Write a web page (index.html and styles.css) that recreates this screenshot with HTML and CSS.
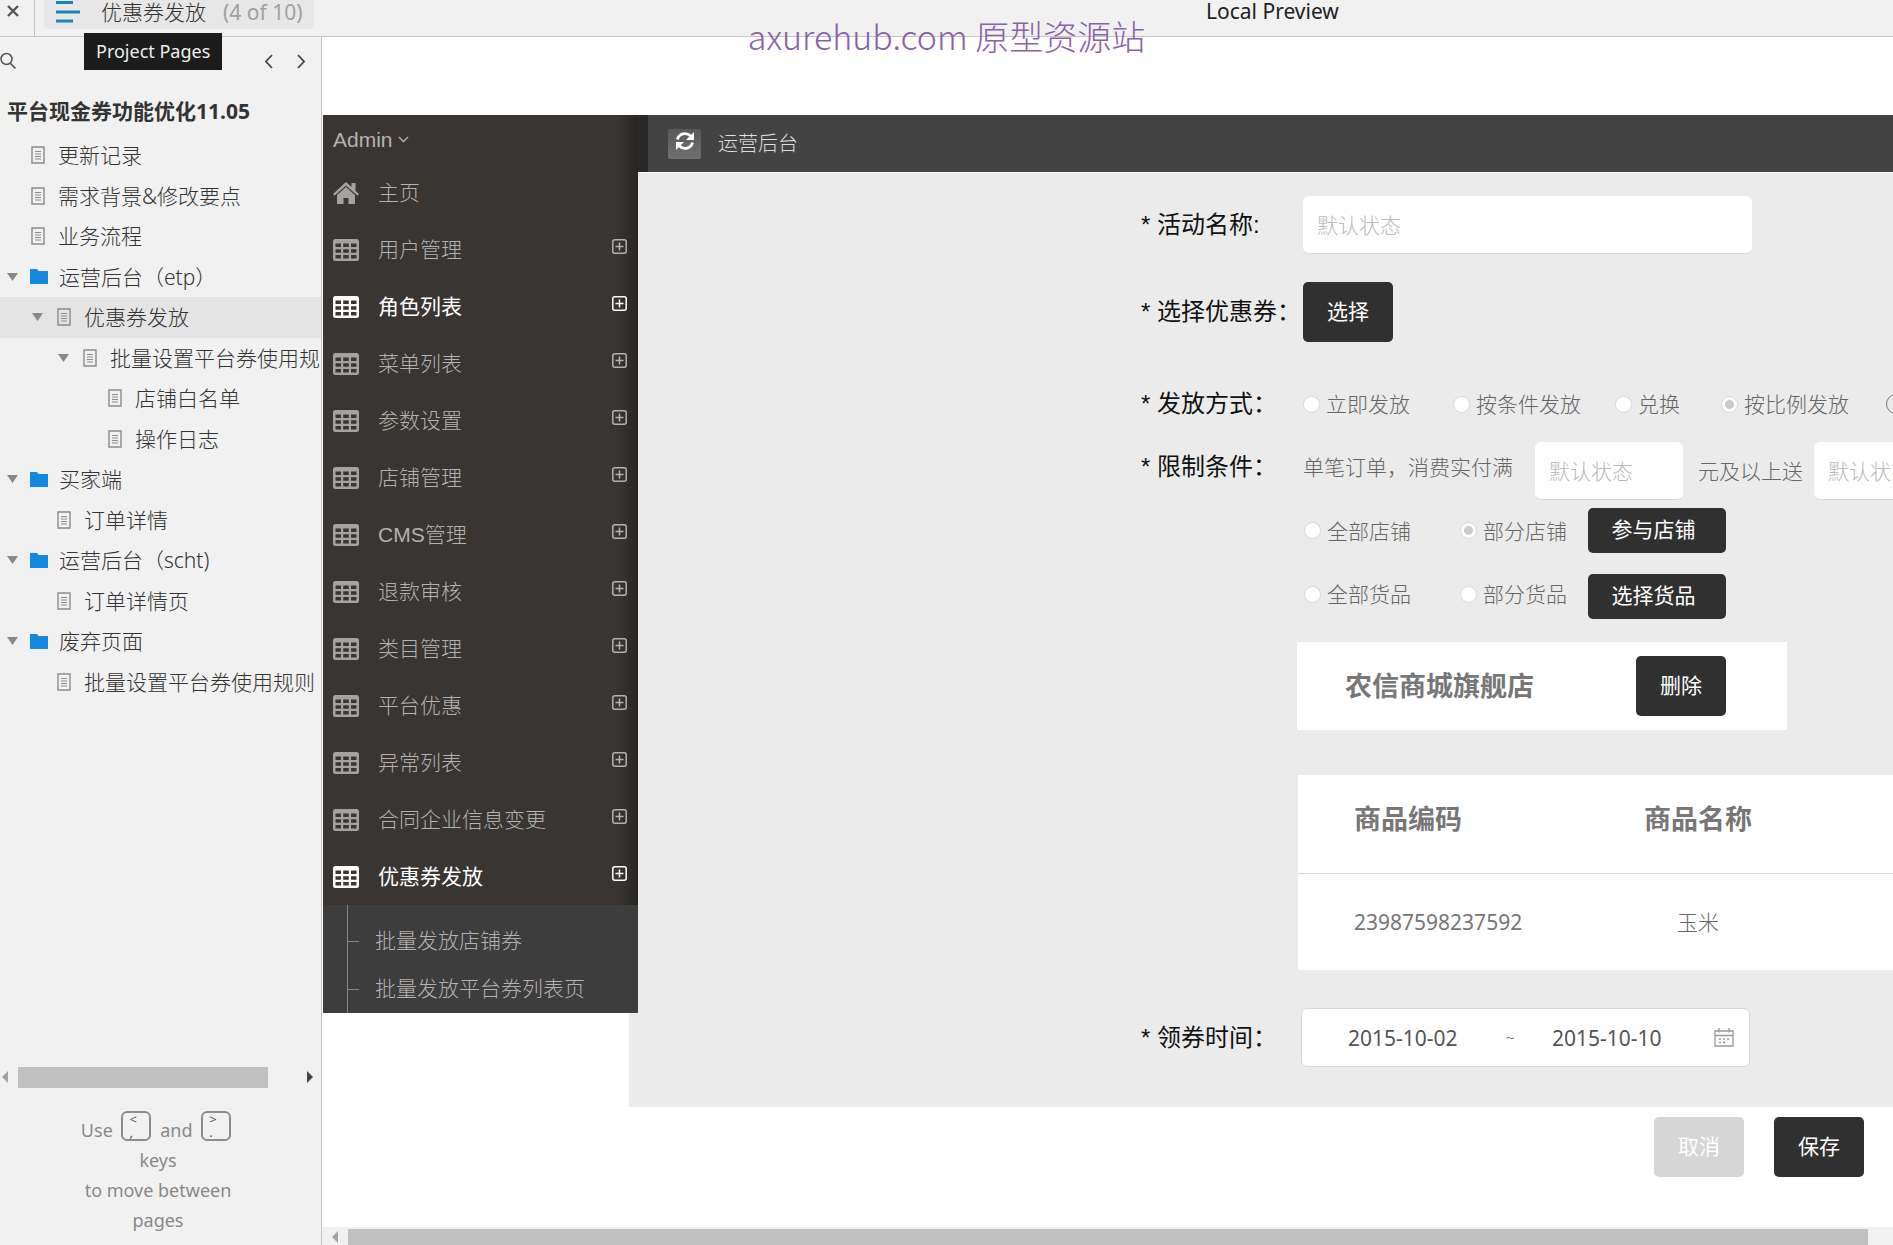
FILE: index.html
```html
<!DOCTYPE html>
<html lang="zh-CN">
<head>
<meta charset="utf-8">
<meta name="viewport" content="width=device-width, initial-scale=1">
<title>优惠券发放</title>
<link rel="stylesheet" href="styles.css">
</head>
<body>
<svg class="defs" aria-hidden="true">
  <symbol id="page" viewBox="0 0 14 18"><path d="M1 1h12v16H1z" fill="none" stroke="currentColor" stroke-width="1.4"/><path d="M4 5.500h6M4 8h6M4 10.500h6M4 13h6" stroke="currentColor" stroke-width="1.200"/></symbol>
  <symbol id="folder" viewBox="0 0 18 15"><path d="M0 0h7l1.500 2H18v13H0z" fill="#1288de"/></symbol>
  <symbol id="caret" viewBox="0 0 11 8"><path d="M0 0h11L5.500 8z" fill="#888"/></symbol>
  <symbol id="grid" viewBox="0 0 26 22"><path fill="currentColor" fill-rule="evenodd" d="M2.500 0h21A2.500 2.500 0 0 1 26 2.500v17a2.500 2.500 0 0 1-2.500 2.500h-21A2.500 2.500 0 0 1 0 19.500v-17A2.500 2.500 0 0 1 2.500 0zM2.500 4.500v3.500h5.500v-3.500zM10.200 4.500v3.500h5.600v-3.500zM18 4.500v3.500h5.500v-3.500zM2.500 10.200v3.500h5.500v-3.500zM10.200 10.200v3.500h5.600v-3.500zM18 10.200v3.500h5.500v-3.500zM2.500 16v3.500h5.500V16zM10.200 16v3.500h5.600V16zM18 16v3.500h5.500V16z"/></symbol>
  <symbol id="plus" viewBox="0 0 15 15"><rect x=".8" y=".8" width="13.400" height="13.400" rx="2" fill="none" stroke="currentColor" stroke-width="1.500"/><path d="M7.500 3.500v8M3.500 7.500h8" stroke="currentColor" stroke-width="1.500"/></symbol>
</svg>

<header class="topbar">
  <button class="close" aria-label="Close"><svg width="14" height="14" viewBox="0 0 14 14"><path d="M2 2l10 10M12 2L2 12" stroke="#555" stroke-width="2.400"/></svg></button>
  <button class="crumb">
    <svg width="24" height="22" viewBox="0 0 24 22"><path d="M0 1.500h17M0 11h24M0 20h17" stroke="#1a86b8" stroke-width="3"/></svg>
    <span>优惠券发放</span><span class="count">(4 of 10)</span>
  </button>
  <div class="preview">Local Preview</div>
</header>
<div class="tooltip" role="tooltip">Project Pages</div>
<div class="watermark">axurehub.com 原型资源站</div>

<div class="shell">
  <aside class="sidebar">
    <div class="tools">
      <button aria-label="Search"><svg width="16" height="18" viewBox="0 0 16 18"><circle cx="6.500" cy="7" r="5.500" fill="none" stroke="#555" stroke-width="1.500"/><path d="M10.500 11.500l5 5" stroke="#555" stroke-width="1.700"/></svg></button>
      <button class="prev" aria-label="Previous page"><svg width="9" height="15" viewBox="0 0 9 15"><path d="M8 1L2 7.500 8 14" fill="none" stroke="#444" stroke-width="1.800"/></svg></button>
      <button aria-label="Next page"><svg width="9" height="15" viewBox="0 0 9 15"><path d="M1 1l6 6.500L1 14" fill="none" stroke="#444" stroke-width="1.800"/></svg></button>
    </div>
    <h1 class="project">平台现金券功能优化11.05</h1>
    <nav class="tree">
      <a href="#"><svg class="ic-page"><use href="#page"/></svg>更新记录</a>
      <a href="#"><svg class="ic-page"><use href="#page"/></svg>需求背景&amp;修改要点</a>
      <a href="#"><svg class="ic-page"><use href="#page"/></svg>业务流程</a>
      <a href="#" class="parent"><svg class="ic-caret"><use href="#caret"/></svg><svg class="ic-folder"><use href="#folder"/></svg>运营后台（etp）</a>
      <a href="#" class="parent l1 current"><svg class="ic-caret"><use href="#caret"/></svg><svg class="ic-page"><use href="#page"/></svg>优惠券发放</a>
      <a href="#" class="parent l2"><svg class="ic-caret"><use href="#caret"/></svg><svg class="ic-page"><use href="#page"/></svg>批量设置平台券使用规则</a>
      <a href="#" class="l3"><svg class="ic-page"><use href="#page"/></svg>店铺白名单</a>
      <a href="#" class="l3"><svg class="ic-page"><use href="#page"/></svg>操作日志</a>
      <a href="#" class="parent"><svg class="ic-caret"><use href="#caret"/></svg><svg class="ic-folder"><use href="#folder"/></svg>买家端</a>
      <a href="#" class="l1"><svg class="ic-page"><use href="#page"/></svg>订单详情</a>
      <a href="#" class="parent"><svg class="ic-caret"><use href="#caret"/></svg><svg class="ic-folder"><use href="#folder"/></svg>运营后台（scht)</a>
      <a href="#" class="l1"><svg class="ic-page"><use href="#page"/></svg>订单详情页</a>
      <a href="#" class="parent"><svg class="ic-caret"><use href="#caret"/></svg><svg class="ic-folder"><use href="#folder"/></svg>废弃页面</a>
      <a href="#" class="l1"><svg class="ic-page"><use href="#page"/></svg>批量设置平台券使用规则</a>
    </nav>
    <div class="hscroll side-scroll">
      <svg width="6" height="12" viewBox="0 0 6 12"><path d="M6 0v12L0 6z" fill="#a3a3a3"/></svg>
      <div class="thumb"></div>
      <svg width="6" height="12" viewBox="0 0 6 12"><path d="M0 0v12l6-6z" fill="#444"/></svg>
    </div>
    <div class="hint">Use <kbd><span>&lt;</span><span>,</span></kbd> and <kbd><span>&gt;</span><span>.</span></kbd><br>keys<br>to move between<br>pages</div>
  </aside>

  <main class="stage">
    <div class="admin">
      <nav class="menu">
        <button class="user">Admin<svg width="11" height="7" viewBox="0 0 11 7"><path d="M1 1l4.500 4.500L10 1" fill="none" stroke="#a9a7a5" stroke-width="1.600"/></svg></button>
        <a href="#"><svg class="ic-home" viewBox="0 0 26 22"><path fill="currentColor" d="M13 0l5.500 5V1h4v7.700L26 12l-1.500 1.800L13 3.500 1.500 13.800 0 12zM13 5l9 8v9h-6.500v-6h-5v6H4v-9z"/></svg>主页</a>
        <a href="#"><svg class="ic-grid"><use href="#grid"/></svg>用户管理<svg class="ic-plus"><use href="#plus"/></svg></a>
        <a href="#" class="on"><svg class="ic-grid"><use href="#grid"/></svg>角色列表<svg class="ic-plus"><use href="#plus"/></svg></a>
        <a href="#"><svg class="ic-grid"><use href="#grid"/></svg>菜单列表<svg class="ic-plus"><use href="#plus"/></svg></a>
        <a href="#"><svg class="ic-grid"><use href="#grid"/></svg>参数设置<svg class="ic-plus"><use href="#plus"/></svg></a>
        <a href="#"><svg class="ic-grid"><use href="#grid"/></svg>店铺管理<svg class="ic-plus"><use href="#plus"/></svg></a>
        <a href="#"><svg class="ic-grid"><use href="#grid"/></svg>CMS管理<svg class="ic-plus"><use href="#plus"/></svg></a>
        <a href="#"><svg class="ic-grid"><use href="#grid"/></svg>退款审核<svg class="ic-plus"><use href="#plus"/></svg></a>
        <a href="#"><svg class="ic-grid"><use href="#grid"/></svg>类目管理<svg class="ic-plus"><use href="#plus"/></svg></a>
        <a href="#"><svg class="ic-grid"><use href="#grid"/></svg>平台优惠<svg class="ic-plus"><use href="#plus"/></svg></a>
        <a href="#"><svg class="ic-grid"><use href="#grid"/></svg>异常列表<svg class="ic-plus"><use href="#plus"/></svg></a>
        <a href="#"><svg class="ic-grid"><use href="#grid"/></svg>合同企业信息变更<svg class="ic-plus"><use href="#plus"/></svg></a>
        <a href="#" class="on"><svg class="ic-grid"><use href="#grid"/></svg>优惠券发放<svg class="ic-plus"><use href="#plus"/></svg></a>
        <div class="submenu">
          <div class="branch">
            <a href="#">批量发放店铺券</a>
            <a href="#">批量发放平台券列表页</a>
          </div>
        </div>
      </nav>

      <section class="work">
        <header class="workbar">
          <button class="refresh" aria-label="刷新"><svg width="20" height="20" viewBox="0 0 20 20"><path d="M2.500 8.500A7.500 7 0 0 1 15.500 5M17.500 11.500A7.500 7 0 0 1 4.500 15" fill="none" stroke="#fff" stroke-width="2.800"/><path d="M19 1v8h-8zM1 19v-8h8z" fill="#fff"/></svg></button>
          运营后台
        </header>
        <form class="form">
          <div class="row">
            <label class="name" for="act">* 活动名称:</label>
            <input class="box wide" id="act" type="text" placeholder="默认状态">
          </div>
          <div class="row coupon">
            <span class="name">* 选择优惠券：</span>
            <button class="btn square" type="button">选择</button>
          </div>
          <div class="row mode">
            <span class="name">* 发放方式：</span>
            <div class="modes">
              <label><input type="radio" name="mode">立即发放</label>
              <label><input type="radio" name="mode">按条件发放</label>
              <label><input type="radio" name="mode">兑换</label>
              <label><input type="radio" name="mode" checked>按比例发放</label>
              <label><input class="outlined" type="radio" name="mode" aria-label="其他"></label>
            </div>
          </div>
          <div class="row limit">
            <span class="name">* 限制条件：</span>
            <label class="before" for="full">单笔订单，消费实付满</label>
            <input class="box amount" id="full" type="text" placeholder="默认状态">
            <label class="after" for="gift">元及以上送</label>
            <input class="box amount" id="gift" type="text" placeholder="默认状态">
          </div>
          <div class="scope">
            <label><input type="radio" name="shop">全部店铺</label>
            <label><input type="radio" name="shop" checked>部分店铺</label>
            <button class="btn" type="button">参与店铺</button>
          </div>
          <div class="scope goods">
            <label><input type="radio" name="goods">全部货品</label>
            <label><input type="radio" name="goods">部分货品</label>
            <button class="btn" type="button">选择货品</button>
          </div>
          <div class="shop-card">
            <strong>农信商城旗舰店</strong>
            <button class="btn square" type="button">删除</button>
          </div>
          <table class="items">
            <thead><tr><th class="code">商品编码</th><th class="title">商品名称</th><th></th></tr></thead>
            <tbody><tr><td class="code">23987598237592</td><td class="title">玉米</td><td></td></tr></tbody>
          </table>
          <div class="row time">
            <span class="name">* 领券时间：</span>
            <div class="box wide dates">
              <input type="text" value="2015-10-02" aria-label="开始日期">
              <span class="tilde">~</span>
              <input type="text" value="2015-10-10" aria-label="结束日期">
              <svg width="20" height="19" viewBox="0 0 20 19"><path d="M1 3h18v15H1zM1 7.500h18M5 0v4.500M15 0v4.500" fill="none" stroke="#999" stroke-width="1.300"/><path d="M5 11h2M9 11h2M13 11h2M5 14.500h2M9 14.500h2" stroke="#999" stroke-width="1.500"/></svg>
            </div>
          </div>
        </form>
      </section>
    </div>
    <div class="actions">
      <button class="btn square cancel" type="button">取消</button>
      <button class="btn square" type="button">保存</button>
    </div>
    <div class="hscroll main-scroll">
      <svg width="6" height="12" viewBox="0 0 6 12"><path d="M6 0v12L0 6z" fill="#a3a3a3"/></svg>
      <div class="thumb"></div>
    </div>
  </main>
</div>
</body>
</html>
```
FILE: styles.css
```css
* { box-sizing: border-box; }
body {
  margin: 0;
  height: 100vh;
  display: flex;
  flex-direction: column;
  overflow: hidden;
  position: relative;
  background: #fff;
  color: #333;
  font: 300 21px/30px "Noto Sans", "Noto Sans CJK SC", sans-serif;
}
a { color: inherit; text-decoration: none; }
button { font: inherit; color: inherit; border: 0; background: none; padding: 0; }
svg { display: block; flex: none; }
.defs { position: absolute; width: 0; height: 0; }

/* top bar */
.topbar {
  flex: none;
  height: 37px;
  display: flex;
  align-items: flex-start;
  background: #f1f1f1;
  border-bottom: 1px solid #c4c4c4;
}
.close { width: 35px; height: 36px; padding: 2px 6px 16px; border-right: 1px solid #c4c4c4; }
.crumb {
  margin-left: 9px;
  width: 270px;
  height: 29px;
  padding: 0 0 6px 12px;
  display: flex;
  align-items: center;
  background: #e7e7e7;
  border-radius: 0 0 4px 4px;
  color: #333;
  white-space: nowrap;
}
.crumb svg { margin-right: 21px; }
.count { margin-left: 17px; color: #a0a0a0; font-weight: 400; }
.preview { margin-left: 892px; line-height: 22px; color: #222; white-space: nowrap; font-weight: 400; }
.tooltip {
  position: absolute;
  left: 84px;
  top: 33px;
  padding: 0 12px;
  background: #1c1c1c;
  color: #eee;
  font-size: 18px;
  font-weight: 400;
  line-height: 37px;
}
.watermark {
  position: absolute;
  left: 0;
  right: 0;
  top: 16px;
  text-align: center;
  font: 300 34px/40px "Noto Sans CJK SC", sans-serif;
  color: #8862a8;
  pointer-events: none;
}

.shell { flex: 1; display: flex; min-height: 0; }

/* page tree */
.sidebar {
  flex: none;
  width: 322px;
  display: flex;
  flex-direction: column;
  background: #f1f1f1;
  border-right: 1px solid #c4c4c4;
  overflow: hidden;
}
.tools { display: flex; align-items: center; height: 48px; padding-right: 15px; }
.tools .prev { margin: 0 24px 0 auto; }
.project { margin: 11px 0 9px; padding-left: 7px; font-size: 21px; line-height: 30px; font-weight: 700; white-space: nowrap; }
.tree { display: grid; grid-template-rows: repeat(14, 1fr); height: 567px; flex: none; }
.tree a { display: flex; align-items: center; padding-left: 31px; white-space: nowrap; }
.tree .l1 { padding-left: 57px; }
.tree .l2 { padding-left: 82px; }
.tree .l3 { padding-left: 108px; }
.tree .parent { padding-left: 7px; }
.tree .parent.l1 { padding-left: 32px; }
.tree .parent.l2 { padding-left: 58px; }
.tree .current { background: #e4e4e4; }
.ic-page { width: 14px; height: 18px; margin-right: 13px; color: #8c8c8c; }
.ic-folder { width: 18px; height: 15px; margin-right: 11px; }
.ic-caret { width: 11px; height: 8px; margin-right: 12px; }
.parent .ic-page { margin-left: 2px; }

.hscroll { display: flex; align-items: center; }
.thumb { background: #c1c1c1; }
.side-scroll { margin-top: auto; padding: 0 8px 0 2px; height: 22px; }
.side-scroll .thumb { width: 250px; height: 21px; margin: 0 auto 0 10px; }
.hint { padding: 23px 5px 10px 0; text-align: center; font-size: 18px; font-weight: 400; line-height: 30px; color: #888; }
.hint kbd {
  display: inline-block;
  width: 30px;
  height: 30px;
  margin: 0 4px;
  padding-left: 6px;
  border: 2px solid #8c8c8c;
  border-radius: 6px;
  font: 13px/13px "Noto Sans", sans-serif;
  text-align: left;
  color: #555;
}
.hint kbd span { display: block; }

/* prototype canvas */
.stage { flex: 1; min-width: 0; display: flex; flex-direction: column; overflow: hidden; }
.admin { display: flex; align-items: flex-start; margin: 78px 0 0 1px; }
.menu {
  position: relative;
  flex: none;
  width: 315px;
  background: linear-gradient(90deg, #393532 93%, #282624);
  color: #b4b2b0;
  font-family: "Liberation Sans", "Noto Sans CJK SC", sans-serif;
}
.user { display: flex; align-items: center; gap: 5px; height: 49px; padding-left: 10px; }
.menu > a { display: flex; align-items: center; height: 57px; padding: 0 11px 0 10px; }
.menu .on { color: #fff; font-weight: 400; }
.ic-grid, .ic-home { width: 26px; height: 22px; margin-right: 19px; }
.menu a:not(.on) .ic-grid, .ic-home { color: #a5a3a1; }
.ic-plus { width: 15px; height: 15px; margin: 0 0 6px auto; }
.submenu { padding-left: 24px; background: #3e3d3d; }
.branch { padding-top: 12px; border-left: 1px solid #858585; }
.branch a { display: flex; align-items: center; gap: 16px; height: 48px; }
.branch a::before { content: ""; width: 11px; height: 1px; background: #858585; }

.work { flex: 1; min-width: 0; margin-left: -9px; background: #ebebeb; }
.workbar {
  display: flex;
  align-items: center;
  gap: 17px;
  height: 57px;
  margin-left: 9px;
  padding-left: 20px;
  background: #434343;
  border-left: 10px solid #2a2929;
  color: #ddd;
  font-size: 20px;
}
.refresh { width: 33px; height: 30px; padding: 0 6px 6px 7px; border-radius: 2px; background: linear-gradient(#595959, #707070); }

/* form */
.form { padding: 23px 0 40px 512px; color: #666; overflow: hidden; border-top: 1px solid #fff; }
.row { display: flex; align-items: center; }
.name {
  flex: none;
  width: 162px;
  font-family: "Liberation Sans", "Noto Sans CJK SC", sans-serif;
  font-size: 24px;
  font-weight: 400;
  color: #111;
  white-space: nowrap;
}
.box {
  flex: none;
  height: 58px;
  padding: 0 14px;
  background: #fff;
  border: 0;
  border-bottom: 1px solid #d8d8d8;
  border-radius: 6px;
  font: inherit;
  color: #666;
}
.box::placeholder { color: #bbb; opacity: 1; }
.wide { width: 449px; }
.amount { width: 148px; }
.btn {
  height: 45px;
  width: 138px;
  padding: 0 7px 3px 0;
  border-radius: 5px;
  background: #303030;
  color: #fff;
  font-weight: 400;
}
.square { width: 90px; height: 60px; padding: 0 0 3px; }
.coupon { margin-top: 28px; }
.mode { margin-top: 45px; height: 34px; }
.modes { display: grid; grid-template-columns: 150px 162px 106px 165px 20px; }
.form label { flex: none; white-space: nowrap; }
.modes label, .scope label { display: flex; align-items: center; gap: 6px; }
input[type="radio"] {
  appearance: none;
  flex: none;
  width: 17px;
  height: 17px;
  margin: 0;
  border-radius: 50%;
  background: #fff;
  border: 1px solid #d8d8d8;
}
input[type="radio"]:checked { background: radial-gradient(circle, #ccc 4px, #fff 5px); }
input.outlined { width: 20px; height: 20px; background: none; border-color: #777; }
.limit { margin-top: 21px; align-items: flex-start; }
.limit .name, .limit .before { line-height: 50px; }
.limit .before { width: 232px; }
.limit .after { width: 131px; padding-left: 15px; line-height: 58px; }
.scope { display: grid; grid-template-columns: 156px 128px 138px; margin: 8px 0 0 163px; }
.goods { margin-top: 21px; }
.goods label { padding-bottom: 5px; }
.shop-card {
  display: flex;
  align-items: center;
  justify-content: space-between;
  width: 490px;
  height: 88px;
  margin: 23px 0 0 156px;
  padding: 0 61px 0 48px;
  background: #fff;
}
.shop-card strong, .items th { font-size: 27px; font-weight: 700; color: #777; }
.items {
  width: calc(100% - 157px);
  margin: 45px 0 0 157px;
  table-layout: fixed;
  border-collapse: collapse;
  background: #fff;
}
.items th, .items td { height: 97px; padding: 0; border-left: 0; }
.items th { height: 98px; padding-bottom: 10px; border-bottom: 1px solid #d8d8d8; }
.items .code { width: 230px; padding-left: 56px; text-align: left; }
.items td.code { font-weight: 400; color: #777; }
.items .title { width: 340px; text-align: center; }
.time { margin-top: 38px; }
.time .name { width: 160px; }
.dates { display: flex; align-items: center; height: 59px; padding: 0 15px 0 46px; border: 1px solid #d8d8d8; }
.dates input { width: 120px; padding: 0; border: 0; background: none; font: inherit; font-weight: 400; color: #555; }
.dates .tilde { width: 84px; text-align: center; font-size: 16px; }
.dates svg { margin-left: auto; }

.actions { display: flex; justify-content: flex-end; gap: 30px; padding: 10px 29px 0 0; }
.cancel { background: #d6d6d6; }
.main-scroll { flex: none; margin-top: auto; height: 18px; padding: 2px 25px 0 10px; background: #f1f1f1; }
.main-scroll .thumb { flex: 1; height: 16px; margin-left: 10px; }
```
